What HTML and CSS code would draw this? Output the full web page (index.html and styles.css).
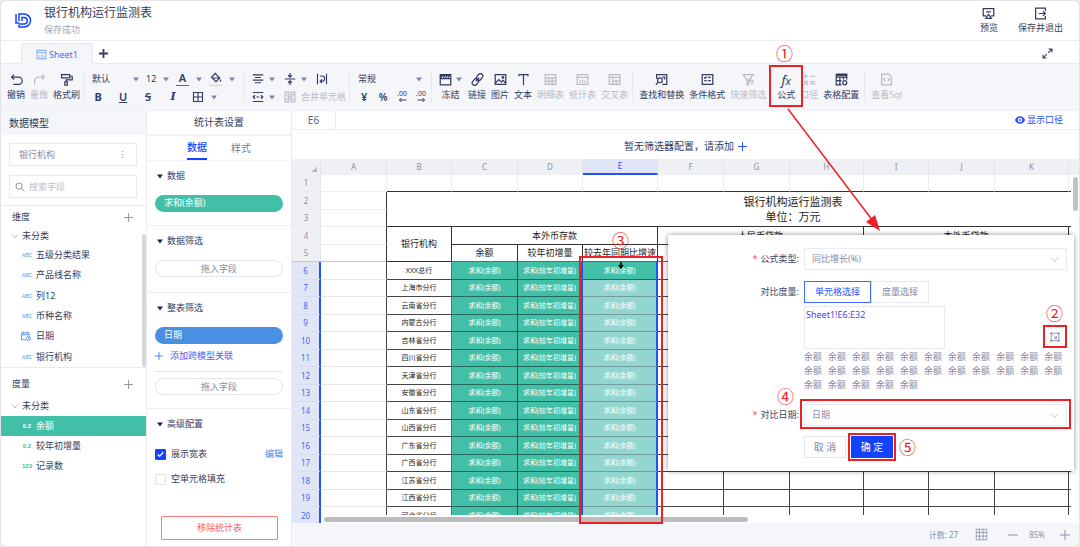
FILE: index.html
```
<!DOCTYPE html>
<html lang="zh-CN">
<head>
<meta charset="utf-8">
<meta name="viewport" content="width=device-width, initial-scale=1">
<title>银行机构运行监测表</title>
<link rel="stylesheet" href="styles.css">
</head>
<body>
<svg class="sprite" aria-hidden="true">
  <symbol id="caret" viewBox="0 0 6 5"><path d="M0 .5h6L3 4.5z" fill="currentColor"/></symbol>
  <symbol id="plus" viewBox="0 0 10 10"><path d="M5 0v10M0 5h10"/></symbol>
  <symbol id="chev" viewBox="0 0 10 10"><path d="M1.5 3 5 7.5 8.500 3"/></symbol>
  <symbol id="undo" viewBox="0 0 16 16"><path d="M5 2 2 5l3 3M2 5h8.500a4.500 4.500 0 0 1 0 9H4"/></symbol>
  <symbol id="redo" viewBox="0 0 16 16"><path d="m11 2 3 3-3 3M14 5H7a5 5 0 0 0-5 5v4"/></symbol>
  <symbol id="roller" viewBox="0 0 16 16"><path d="M2 2h10v4H2zM12 4h3v4.500H7.500V11M6 11h3v4H6z"/></symbol>
  <symbol id="bucket" viewBox="0 0 16 16"><path d="m6 1 7 7-5 5-6-6 5-5M3 8h9M14 10v3"/></symbol>
  <symbol id="grid4" viewBox="0 0 16 16"><path d="M2 2h12v12H2zM8 2v12M2 8h12"/></symbol>
  <symbol id="center" viewBox="0 0 16 16"><path d="M1 2.500h14M4 6h8M1 9.500h14M4 13h8"/></symbol>
  <symbol id="middle" viewBox="0 0 16 16"><path d="M1 8h14M8 0v5M5.500 3 8 5.500 10.500 3M8 16v-5M5.500 13 8 10.500 10.500 13"/></symbol>
  <symbol id="wrap" viewBox="0 0 16 16"><path d="M2 1v14M14 1v14M5 4h3a3 3 0 0 1 0 7H6M8 8.500 5.500 11 8 13.500"/></symbol>
  <symbol id="fitw" viewBox="0 0 16 16"><path d="M1 2h14M1 14h14M1 8h3M12 8h3M6 8h4M4 5.500 1.500 8 4 10.500M12 5.500 14.500 8 12 10.500"/></symbol>
  <symbol id="merge" viewBox="0 0 16 16"><path d="M6.500 1.500h-5v13h5zM14.500 1.500h-5v13h5zM1.500 5h5M1.500 11h5M9.500 5h5M9.500 11h5M4 8h8"/></symbol>
  <symbol id="freeze" viewBox="0 0 16 16"><path d="M1.500 2h13v12.500h-13zM1.500 7h13M2 6l3-4M5 6l3-4M8 6l3-4M11 6l3-4M1.500 3h13"/></symbol>
  <symbol id="link" viewBox="0 0 16 16"><g transform="rotate(-50 8 8)"><rect x="-.5" y="5" width="9" height="6" rx="3"/><rect x="7.500" y="5" width="9" height="6" rx="3"/><path d="M5 8h6"/></g></symbol>
  <symbol id="image" viewBox="0 0 16 16"><path d="M1.500 2h13v12h-13zM2 12l4-4 3 3 2-2 3 3"/><circle cx="11" cy="5.500" r="1"/></symbol>
  <symbol id="text" viewBox="0 0 16 16"><path d="M2.500 4V2h11v2M8 2v13"/></symbol>
  <symbol id="sheet" viewBox="0 0 16 16"><path d="M1.500 2h13v12h-13zM1.500 6h13M1.500 10h13M6 6v8M10 6v8"/></symbol>
  <symbol id="stat" viewBox="0 0 16 16"><path d="M1.500 2h13v12h-13zM1.500 5.500h13M5 9v3M8 8v4M11 9v3"/></symbol>
  <symbol id="cross" viewBox="0 0 16 16"><path d="M1.500 2h13v12h-13zM1.500 5.500h13M5.500 5.500V14M5.500 10h9M10 8v6"/></symbol>
  <symbol id="find" viewBox="0 0 16 16"><path d="M2 7V2h12.500v12H9M9 5h3v3"/><circle cx="6" cy="9" r="3"/><path d="m4 11.500-3 3"/></symbol>
  <symbol id="cond" viewBox="0 0 16 16"><path d="M1.500 2h13v12h-13zM4 5.500l1 1 2-2M8.500 5.500H12M4 9.500h3M8.500 9.500H12"/></symbol>
  <symbol id="filter" viewBox="0 0 16 16"><path d="M1 2h13l-4.500 5M1 2l5 6v6l2 1V7M11.500 6 9.500 10h4l-2 4"/></symbol>
  <symbol id="calc" viewBox="0 0 16 16"><path d="M1 4h5M3.500 1.500v5M9 4h6M1.500 9.500l4.500 5M6 9.500l-4.500 5M9 10.500h6M9 13.500h6"/></symbol>
  <symbol id="config" viewBox="0 0 16 16"><path d="M1.500 1.500h13V8M1.500 1.500v13H8M1.500 5h13M1.500 9.500H8M6 5v9.500M10.500 5v3M1.500 3h13"/><circle cx="12" cy="12" r="2.500"/></symbol>
  <symbol id="sql" viewBox="0 0 16 16"><path d="M2 1.500h9l3 3v10H2zM6.500 6 4.500 8l2 2M9.500 6l2 2-2 2"/></symbol>
  <symbol id="preview" viewBox="0 0 16 16"><path d="M5 11H1.500V2h13v9H11M5 6h6M8 9l3.500 5h-7z"/></symbol>
  <symbol id="exit" viewBox="0 0 16 16"><path d="M14 5V1.500H2v13h12V11M6 8h8M11 5l3 3-3 3"/></symbol>
  <symbol id="expand" viewBox="0 0 16 16"><path d="M9.500 1.500h5v5M14 2 9 7M6.500 14.500h-5v-5M2 14l5-5"/></symbol>
  <symbol id="search" viewBox="0 0 16 16"><circle cx="6.500" cy="6.500" r="5"/><path d="m10 10 5 5"/></symbol>
  <symbol id="cal" viewBox="0 0 16 16"><path d="M8 14H1V3h12v4M1 6h12M4 1v3M10 1v3"/><circle cx="12" cy="12" r="3.200"/><path d="M12 10.500V12h1.500"/></symbol>
  <symbol id="pick" viewBox="0 0 16 16"><path d="M3 3h10v10H3zM1.500 3h3M3 1.500v3M11.500 3h3M13 1.500v3M1.500 13h3M3 11.500v3M11.500 13h3M13 11.500v3M6 6l4 4M10 7v3H7"/></symbol>
</svg>

<div class="app">
  <header class="top">
    <svg class="logo" viewBox="0 0 17 16" aria-hidden="true"><path d="M1 1v9h3.500M4 8V1h5a6.500 6.500 0 0 1 0 13H4v-2.500M7 8V4.500h2a3 3 0 0 1 0 6.500H4.500"/></svg>
    <div class="doc"><h1>银行机构运行监测表</h1><p>保存成功</p></div>
    <button class="tool"><svg><use href="#preview"/></svg>预览</button>
    <button class="tool"><svg><use href="#exit"/></svg>保存并退出</button>
  </header>

  <nav class="tabs">
    <button class="tab"><svg><use href="#stat"/></svg>Sheet1</button>
    <button class="add" aria-label="新增"><svg><use href="#plus"/></svg></button>
    <button class="full" aria-label="全屏"><svg><use href="#expand"/></svg></button>
  </nav>

  <div class="toolbar">
    <div class="group history">
      <button class="tool"><svg><use href="#undo"/></svg>撤销</button>
      <button class="tool off"><svg><use href="#redo"/></svg>重做</button>
      <button class="tool"><svg><use href="#roller"/></svg>格式刷</button>
    </div>
    <div class="group two font">
      <div class="line">
        <span class="pick w-font"><select aria-label="字体"><option>默认</option></select><svg class="caret"><use href="#caret"/></svg></span>
        <span class="pick w-size"><select aria-label="字号"><option>12</option></select><svg class="caret"><use href="#caret"/></svg></span>
        <button class="mini"><span class="ink red">A</span><svg class="caret"><use href="#caret"/></svg></button>
        <button class="mini" aria-label="填充"><span class="ink yellow"><svg><use href="#bucket"/></svg></span><svg class="caret"><use href="#caret"/></svg></button>
      </div>
      <div class="line letters">
        <button class="mini b">B</button><button class="mini u">U</button><button class="mini s">S</button><button class="mini i">I</button>
        <button class="mini" aria-label="边框"><svg><use href="#grid4"/></svg><svg class="caret"><use href="#caret"/></svg></button>
      </div>
    </div>
    <div class="group two align">
      <div class="line">
        <button class="mini" aria-label="水平对齐"><svg><use href="#center"/></svg><svg class="caret"><use href="#caret"/></svg></button>
        <button class="mini" aria-label="垂直对齐"><svg><use href="#middle"/></svg><svg class="caret"><use href="#caret"/></svg></button>
        <button class="mini" aria-label="换行"><svg><use href="#wrap"/></svg></button>
      </div>
      <div class="line">
        <button class="mini" aria-label="列宽"><svg><use href="#fitw"/></svg><svg class="caret"><use href="#caret"/></svg></button>
        <button class="mini off"><svg><use href="#merge"/></svg>合并单元格</button>
      </div>
    </div>
    <div class="group two number">
      <div class="line"><span class="pick w-num"><select aria-label="数字格式"><option>常规</option></select><svg class="caret"><use href="#caret"/></svg></span></div>
      <div class="line"><button class="mini sym">¥</button><button class="mini sym">%</button>
        <button class="mini dec"><span>.00</span><svg viewBox="0 0 8 4"><path d="M8 2H1M3 0 1 2l2 2"/></svg></button>
        <button class="mini dec"><span>.00</span><svg viewBox="0 0 8 4"><path d="M0 2h7M5 0l2 2-2 2"/></svg></button></div>
    </div>
    <div class="group insert">
      <button class="tool drop"><span class="pair"><svg><use href="#freeze"/></svg><svg class="caret"><use href="#caret"/></svg></span>冻结</button>
      <button class="tool"><svg><use href="#link"/></svg>链接</button>
      <button class="tool"><svg><use href="#image"/></svg>图片</button>
      <button class="tool"><svg><use href="#text"/></svg>文本</button>
      <button class="tool off"><svg><use href="#sheet"/></svg>明细表</button>
      <button class="tool off"><svg><use href="#stat"/></svg>统计表</button>
      <button class="tool off"><svg><use href="#cross"/></svg>交叉表</button>
    </div>
    <div class="group review">
      <button class="tool"><svg><use href="#find"/></svg>查找和替换</button>
      <button class="tool"><svg><use href="#cond"/></svg>条件格式</button>
      <button class="tool off"><svg><use href="#filter"/></svg>快速筛选</button>
      <button class="tool formula"><i>f<small>x</small></i>公式</button>
      <button class="tool off"><svg><use href="#calc"/></svg>口径</button>
      <button class="tool"><svg><use href="#config"/></svg>表格配置</button>
    </div>
    <div class="group last"><button class="tool off"><svg><use href="#sql"/></svg>查看Sql</button></div>
  </div>

  <div class="work">
    <aside class="model">
      <h2>数据模型</h2>
      <div class="inputs">
        <button class="source">银行机构<span>⋮</span></button>
        <label class="search"><svg><use href="#search"/></svg><input type="text" placeholder="搜索字段" aria-label="搜索字段"></label>
      </div>
      <section class="dims">
        <h3>维度<button aria-label="添加维度"><svg><use href="#plus"/></svg></button></h3>
        <p class="folder"><svg><use href="#chev"/></svg>未分类</p>
        <ul>
          <li><em>ABC</em>五级分类结果</li>
          <li><em>ABC</em>产品线名称</li>
          <li><em>ABC</em>列12</li>
          <li><em>ABC</em>币种名称</li>
          <li><em><svg><use href="#cal"/></svg></em>日期</li>
          <li><em>ABC</em>银行机构</li>
        </ul>
        <span class="thumb"></span>
      </section>
      <section class="meas">
        <h3>度量<button aria-label="添加度量"><svg><use href="#plus"/></svg></button></h3>
        <p class="folder"><svg><use href="#chev"/></svg>未分类</p>
        <ul>
          <li class="on"><em>0.2</em>余额</li>
          <li><em>0.2</em>较年初增量</li>
          <li><em>123</em>记录数</li>
        </ul>
      </section>
    </aside>

    <aside class="setting">
      <h2>统计表设置</h2>
      <div class="switch"><button class="on">数据</button><button>样式</button></div>
      <section class="s-data"><h3><svg><use href="#caret"/></svg>数据</h3><div class="pill green">求和(余额)</div></section>
      <section class="s-filter"><h3><svg><use href="#caret"/></svg>数据筛选</h3><div class="pill empty">拖入字段</div></section>
      <section class="s-whole"><h3><svg><use href="#caret"/></svg>整表筛选</h3><div class="pill blue">日期</div>
        <button class="relate"><svg><use href="#plus"/></svg>添加跨模型关联</button>
        <div class="pill empty">拖入字段</div></section>
      <section class="s-more"><h3><svg><use href="#caret"/></svg>高级配置</h3>
        <div class="check"><label><input type="checkbox" checked>展示宽表</label><a href="#">编辑</a></div>
        <div class="check"><label><input type="checkbox">空单元格填充</label></div>
        <button class="remove">移除统计表</button>
      </section>
    </aside>

    <main class="main">
      <div class="cellbar"><span class="ref">E6</span><a href="#"><svg viewBox="0 0 16 12"><path d="M8 0C4 0 1 3 0 6c1 3 4 6 8 6s7-3 8-6c-1-3-4-6-8-6z" fill="currentColor"/><circle cx="8" cy="6" r="3.500" fill="#fff"/><circle cx="8" cy="6" r="1.500" fill="currentColor"/></svg>显示口径</a></div>
      <div class="filterbar">暂无筛选器配置，请添加<button aria-label="添加筛选器"><svg><use href="#plus"/></svg></button></div>
      <div class="sheet">
        <div class="view">
        <table>
          <colgroup><col class="c29"><col class="c66"><col class="c65"><col class="c66"><col class="c65"><col class="c75"><col class="c66"><col class="c66"><col class="c74"><col class="c65"><col class="c66"><col class="c74"><col class="c66"><col class="c65"></colgroup>
          <thead><tr><th class="corner"></th><th>A</th><th>B</th><th>C</th><th>D</th><th class="cur">E</th><th>F</th><th>G</th><th>H</th><th>I</th><th>J</th><th>K</th><th></th><th></th></tr></thead>
          <tbody class="head">
            <tr><th>1</th><td></td><td class="k"></td><td class="k"></td><td class="k"></td><td class="k"></td><td class="k"></td><td class="k"></td><td class="k"></td><td class="k"></td><td class="k"></td><td class="k"></td><td class="k"></td><td class="k"></td></tr>
            <tr><th>2</th><td class="edge"></td><td class="box title" rowspan="2" colspan="12">银行机构运行监测表<br>单位：万元</td></tr>
            <tr><th>3</th><td class="edge"></td></tr>
            <tr><th>4</th><td class="edge"></td><td class="box" rowspan="2">银行机构</td><td class="box" colspan="3">本外币存款</td><td class="box" colspan="3">人民币贷款</td><td class="box" colspan="3">本外币贷款</td><td class="box" colspan="2"></td></tr>
            <tr class="above"><th>5</th><td class="edge"></td><td class="box">余额</td><td class="box">较年初增量</td><td class="box">较去年同期比增速</td><td class="box"></td><td class="box"></td><td class="box"></td><td class="box"></td><td class="box"></td><td class="box"></td><td class="box"></td><td class="box"></td></tr>
          </tbody>
          <tbody class="rows">
            <tr><th>6</th><td></td><td>XXX总行</td><td>求和(余额)</td><td>求和(较年初增量)</td><td>求和(余额)</td><td></td><td></td><td></td><td></td><td></td><td></td><td></td><td></td></tr>
            <tr><th>7</th><td></td><td>上海市分行</td><td>求和(余额)</td><td>求和(较年初增量)</td><td>求和(余额)</td><td></td><td></td><td></td><td></td><td></td><td></td><td></td><td></td></tr>
            <tr><th>8</th><td></td><td>云南省分行</td><td>求和(余额)</td><td>求和(较年初增量)</td><td>求和(余额)</td><td></td><td></td><td></td><td></td><td></td><td></td><td></td><td></td></tr>
            <tr><th>9</th><td></td><td>内蒙古分行</td><td>求和(余额)</td><td>求和(较年初增量)</td><td>求和(余额)</td><td></td><td></td><td></td><td></td><td></td><td></td><td></td><td></td></tr>
            <tr><th>10</th><td></td><td>吉林省分行</td><td>求和(余额)</td><td>求和(较年初增量)</td><td>求和(余额)</td><td></td><td></td><td></td><td></td><td></td><td></td><td></td><td></td></tr>
            <tr><th>11</th><td></td><td>四川省分行</td><td>求和(余额)</td><td>求和(较年初增量)</td><td>求和(余额)</td><td></td><td></td><td></td><td></td><td></td><td></td><td></td><td></td></tr>
            <tr><th>12</th><td></td><td>天津省分行</td><td>求和(余额)</td><td>求和(较年初增量)</td><td>求和(余额)</td><td></td><td></td><td></td><td></td><td></td><td></td><td></td><td></td></tr>
            <tr><th>13</th><td></td><td>安徽省分行</td><td>求和(余额)</td><td>求和(较年初增量)</td><td>求和(余额)</td><td></td><td></td><td></td><td></td><td></td><td></td><td></td><td></td></tr>
            <tr><th>14</th><td></td><td>山东省分行</td><td>求和(余额)</td><td>求和(较年初增量)</td><td>求和(余额)</td><td></td><td></td><td></td><td></td><td></td><td></td><td></td><td></td></tr>
            <tr><th>15</th><td></td><td>山西省分行</td><td>求和(余额)</td><td>求和(较年初增量)</td><td>求和(余额)</td><td></td><td></td><td></td><td></td><td></td><td></td><td></td><td></td></tr>
            <tr><th>16</th><td></td><td>广东省分行</td><td>求和(余额)</td><td>求和(较年初增量)</td><td>求和(余额)</td><td></td><td></td><td></td><td></td><td></td><td></td><td></td><td></td></tr>
            <tr><th>17</th><td></td><td>广西省分行</td><td>求和(余额)</td><td>求和(较年初增量)</td><td>求和(余额)</td><td></td><td></td><td></td><td></td><td></td><td></td><td></td><td></td></tr>
            <tr><th>18</th><td></td><td>江苏省分行</td><td>求和(余额)</td><td>求和(较年初增量)</td><td>求和(余额)</td><td></td><td></td><td></td><td></td><td></td><td></td><td></td><td></td></tr>
            <tr><th>19</th><td></td><td>江西省分行</td><td>求和(余额)</td><td>求和(较年初增量)</td><td>求和(余额)</td><td></td><td></td><td></td><td></td><td></td><td></td><td></td><td></td></tr>
            <tr><th>20</th><td></td><td>河北省分行</td><td>求和(余额)</td><td>求和(较年初增量)</td><td>求和(余额)</td><td></td><td></td><td></td><td></td><td></td><td></td><td></td><td></td></tr>
          </tbody>
        </table>
        <div class="hbar"><span></span></div>
        </div>
        <div class="vbar"><span></span></div>
      </div>
      <footer class="status"><span>计数: 27</span><button class="gridbtn" aria-label="网格"><svg viewBox="0 0 16 16"><path d="M1.500 1.500h13v13h-13zM5.500 1.500v13M10 1.500v13M1.500 5.500h13M1.500 10h13"/></svg></button>
        <button aria-label="缩小"><svg viewBox="0 0 10 10"><path d="M0 5h10"/></svg></button><span>85%</span><button aria-label="放大"><svg><use href="#plus"/></svg></button></footer>
    </main>
  </div>
</div>

<form class="dialog">
  <label class="req" for="type">公式类型:</label>
  <div class="field"><select id="type"><option>同比增长(%)</option></select><svg><use href="#chev"/></svg></div>
  <span class="lab">对比度量:</span>
  <div class="seg"><button type="button" class="on">单元格选择</button><button type="button">度量选择</button></div>
  <div class="range"><textarea aria-label="单元格范围">Sheet1!E6:E32</textarea><button type="button" aria-label="选取区域"><svg><use href="#pick"/></svg></button></div>
  <div class="vals"><span>余额</span><span>余额</span><span>余额</span><span>余额</span><span>余额</span><span>余额</span><span>余额</span><span>余额</span><span>余额</span><span>余额</span><span>余额</span><span>余额</span><span>余额</span><span>余额</span><span>余额</span><span>余额</span><span>余额</span><span>余额</span><span>余额</span><span>余额</span><span>余额</span><span>余额</span><span>余额</span><span>余额</span><span>余额</span><span>余额</span><span>余额</span></div>
  <label class="req" for="date">对比日期:</label>
  <div class="field"><select id="date"><option>日期</option></select><svg><use href="#chev"/></svg></div>
  <div class="acts"><button type="button">取 消</button><button type="button" class="ok">确 定</button></div>
</form>

<div class="notes">
  <svg class="arrow" viewBox="0 0 94 124"><path d="M1 1 86 113" stroke="#ee2026" stroke-width="1.500"/><path d="m93 123-14-9 9-7z" fill="#ee2026"/></svg>
  <svg class="down" viewBox="0 0 6 7"><path d="M3 0v5M1 3l2 3 2-3" stroke="#000" stroke-width="1.500" fill="none"/></svg>
  <span class="frame f1"></span><span class="frame f2"></span><span class="frame f3"></span><span class="frame f4"></span><span class="frame f5"></span>
  <span class="num n1">①</span><span class="num n2">②</span><span class="num n3">③</span><span class="num n4">④</span><span class="num n5">⑤</span>
</div>
</body>
</html>
```
FILE: styles.css
```
* { box-sizing: border-box; margin: 0; padding: 0; }
body {
  background: #e9e9ea;
  color: #333c60;
  font: 9px/14px "Noto Sans", "Noto Sans CJK SC", sans-serif;
  position: relative;
  overflow: hidden;
}
button, input, select, textarea { font: inherit; color: inherit; background: none; border: 0; outline: 0; }
select { appearance: none; }
a { text-decoration: none; }
ul { list-style: none; }
svg { fill: none; stroke: currentColor; stroke-width: 1.5; display: block; flex: none; width: 12px; height: 12px; }
.sprite { position: absolute; width: 0; height: 0; }
.caret { width: 6px; height: 5px; color: #7f86a8; stroke: none; }

.app { display: flex; flex-direction: column; height: 100vh; min-height: 547px; background: #fff; border: 1px solid #e3e4e6; border-radius: 7px; overflow: hidden; }

.top { display: flex; align-items: center; height: 40px; padding: 0 16px 0 14px; border-bottom: 1px solid #ecedf1; flex: none; }
.logo { width: 17px; height: 16px; color: #1443ff; stroke-width: 1.5; margin-right: 12px; }
.doc { flex: 1; }
.doc h1 { font-size: 12px; line-height: 18px; font-weight: 400; }
.doc p { color: #a4a8b8; line-height: 16px; }
.top .tool { margin-left: 20px; }
.tool { display: flex; flex-direction: column; align-items: center; gap: 1px; line-height: 14px; white-space: nowrap; }
.tool svg { width: 13px; height: 13px; }
.off { color: #b9bbc4; }

.tabs { display: flex; height: 23px; padding: 2px 26px 0 20px; border-bottom: 1px solid #e8eaf0; flex: none; align-items: center; }
.tab { display: flex; align-items: center; justify-content: center; gap: 2px; width: 72px; height: 22px; background: #f5f6fa; border: 1px solid #e5e7ee; border-bottom: 0; border-radius: 3px 3px 0 0; color: #4b68f3; font-size: 9px; align-self: flex-start; }
.tab svg { width: 11px; height: 11px; color: #85b5ee; }
.add { margin-left: 6px; }
.add svg { width: 9px; height: 9px; stroke-width: 2; }
.full { margin-left: auto; }
.full svg { width: 11px; height: 11px; }

.toolbar { display: flex; align-items: center; height: 47px; background: #f5f6fa; border-bottom: 1px solid #f0f1f5; flex: none; }
.group { display: flex; gap: 5px; padding: 0 5px; height: 30px; border-right: 1px solid #e6e8ee; align-items: center; flex: none; }
.group .tool svg { margin-bottom: 1px; }
.group .tool .caret { width: 6px; height: 5px; }
.history { padding: 0 4px 0 6px; }
.two { flex-direction: column; align-items: stretch; gap: 4px; }
.line { display: flex; align-items: center; height: 14px; }
.font { width: 160px; padding: 0 7px; }
.font .line { gap: 7px; }
.font .letters { gap: 13px; }
.align { width: 105px; padding: 0 0 0 7px; }
.align .line { gap: 9px; }
.number { width: 82px; padding: 0 0 0 8px; }
.number .line { gap: 7px; }
.insert { padding: 0 4px 0 6px; }
.review { padding: 0 5px 0 6px; }
.last { padding: 0 6px; border: 0; }
.pick { display: flex; align-items: center; }
.pick select { flex: 1; width: 0; height: 14px; }
.w-font { width: 47px; }
.w-size { width: 23px; }
.w-num { width: 64px; }
.mini { display: flex; align-items: center; justify-content: flex-start; gap: 5px; height: 14px; min-width: 12px; font-size: 9px; white-space: nowrap; }
.font .mini { gap: 7px; }
.font .letters .mini { font-size: 11px; justify-content: center; }
.b { font-weight: 700; }
.u { text-decoration: underline; font-weight: 600; }
.s { text-decoration: line-through; font-weight: 600; }
.i { font-style: italic; font-weight: 600; font-family: "DejaVu Serif", serif; }
.ink { display: flex; justify-content: center; width: 13px; height: 14px; font-size: 11px; line-height: 12px; font-weight: 600; border-bottom: 1px solid; }
.ink svg { width: 12px; height: 12px; }
.ink.red { border-bottom-color: #f0302c; }
.ink.yellow { border-bottom-color: #f5e02a; }
.sym { font-size: 11px; font-weight: 600; justify-content: center; }
.sym + .sym { font-size: 10px; }
.dec { flex-direction: column; gap: 0; font-size: 7px; line-height: 8px; }
.dec svg { width: 9px; height: 4px; stroke-width: 1; }
.pair { display: flex; align-items: center; gap: 4px; }
.drop { width: 25px; }
.formula { margin-left: 6px; }
.formula i { font: italic 13px/14px "Noto Sans", sans-serif; height: 14px; }
.formula small { font-size: 11px; }

.work { display: flex; flex: 1; min-height: 0; }
h2, h3 { font-weight: 400; font-size: 9px; }
.model { width: 146px; border-right: 1px solid #e9ebf0; display: flex; flex-direction: column; flex: none; }
.model h2 { background: #f5f6fa; font-size: 10px; line-height: 24px; padding-left: 8px; }
.inputs { padding: 8px 9px 7px 8px; display: grid; gap: 9px; border-bottom: 1px solid #ecedf1; }
.source, .search { display: flex; align-items: center; height: 23px; border: 1px solid #e8eaf0; color: #868ba3; }
.source { justify-content: space-between; padding: 0 9px; }
.search { padding: 0 5px; gap: 4px; }
.search svg { width: 10px; height: 10px; }
.search input { width: 100%; }
.search input::placeholder { color: #bcc0cc; }
.model h3 { display: flex; justify-content: space-between; align-items: center; padding: 0 13px 0 11px; height: 20px; }
.model h3 svg { width: 9px; height: 9px; color: #8b8f9f; stroke-width: 1; }
.folder { display: flex; align-items: center; gap: 3px; padding-left: 10px; height: 18px; }
.folder svg { width: 8px; height: 8px; color: #a9adba; stroke-width: 1; }
.dims { position: relative; display: flex; flex-direction: column; height: 162px; padding-top: 1px; border-bottom: 1px solid #e9ebf0; }
.dims ul { display: flex; flex-direction: column; flex: 1; }
.model li { display: flex; align-items: center; padding-left: 20px; gap: 3px; height: 20px; }
.model .dims li { flex: 1; }
.model em { width: 12px; font: italic 5px/8px "Liberation Sans", sans-serif; color: #4f94e6; flex: none; text-align: center; }
.model em svg { width: 10px; height: 10px; }
.meas { padding-top: 5px; }
.meas h3 { height: 22px; }
.meas .folder { height: 21px; }
.model .meas em { font: 700 6px/8px "Liberation Sans", sans-serif; color: #41c0a8; }
.model .meas .on { background: #41bfa7; color: #fff; }
.model .meas .on em { color: #fff; }
.thumb { position: absolute; right: 0; top: 28px; bottom: 0; width: 4px; border-radius: 2px; background: #d6d7da; }

.setting { width: 145px; border-right: 1px solid #e9ebf0; flex: none; display: flex; flex-direction: column; }
.setting h2 { text-align: center; font-size: 10px; line-height: 23px; border-bottom: 2px solid #f1f2f5; }
.switch { display: flex; justify-content: center; gap: 24px; height: 25px; border-bottom: 1px solid #f1f2f5; }
.switch button { font-size: 10px; color: #747b98; width: 20px; white-space: nowrap; }
.switch .on { color: #1443ff; font-weight: 500; border-bottom: 2px solid #1443ff; }
.setting section { padding: 8px 8px 0; border-bottom: 1px solid #edeef2; }
.setting h3 { display: flex; align-items: center; gap: 4px; height: 14px; }
.setting h3 svg { width: 6px; height: 5px; stroke: none; color: #1b2650; margin-left: 2px; }
.pill { height: 17px; line-height: 16px; border-radius: 9px; padding: 0 9px; color: #fff; margin-top: 12px; }
.green { background: #41bfa7; }
.blue { background: #4990e2; }
.empty { border: 1px solid #e3e5ec; line-height: 15px; text-align: center; color: #868ba3; }
.s-data { height: 65px; }
.s-filter { height: 67px; }
.s-whole { height: 116px; }
.setting .s-more { flex: 1; border: 0; display: flex; flex-direction: column; }
.relate { display: flex; align-items: center; gap: 7px; width: 100%; height: 28px; color: #3f5ff5; border-bottom: 1px solid #e3e5ec; padding-bottom: 3px; }
.relate svg { width: 8px; height: 8px; stroke-width: 1; }
.s-whole .relate + .pill { margin-top: 6px; }
.check { display: flex; justify-content: space-between; height: 14px; margin-top: 11px; }
.s-more h3 + .check { margin-top: 16px; }
.check label { display: flex; align-items: center; gap: 5px; }
.check a { color: #3c8cf5; }
.check input { appearance: none; width: 11px; height: 11px; border: 1px solid #e0e2ea; border-radius: 1px; }
.check input:checked { background: #1443ff url("data:image/svg+xml,%3Csvg xmlns='http://www.w3.org/2000/svg' viewBox='0 0 10 10'%3E%3Cpath d='M2 5l2 2 4-4.500' fill='none' stroke='white' stroke-width='1.400'/%3E%3C/svg%3E"); border-color: #1443ff; }
.remove { margin: auto 5px 6px 6px; height: 24px; border: 1px solid #fb7b7b; border-radius: 1px; color: #f95c5c; }

.main { flex: 1; min-width: 0; display: flex; flex-direction: column; }
.cellbar { display: flex; justify-content: space-between; align-items: center; height: 19px; border-bottom: 1px solid #edeef2; padding-right: 16px; flex: none; }
.ref { width: 44px; line-height: 18px; border-right: 1px solid #edeef2; text-align: center; font-size: 10px; color: #5a6286; }
.cellbar a { display: flex; align-items: center; gap: 2px; color: #2450ff; }
.cellbar svg { width: 10px; height: 8px; stroke: none; }
.filterbar { display: flex; align-items: center; justify-content: center; gap: 4px; height: 29px; padding-top: 3px; font-size: 10px; flex: none; }
.filterbar svg { width: 9px; height: 9px; color: #1443ff; stroke-width: 1; }
.sheet { display: flex; flex: 1; min-height: 0; }
.view { position: relative; flex: 1; min-width: 0; overflow: hidden; }
.vbar { width: 8px; background: linear-gradient(#eff0f3 16px, #fff 16px); padding: 18px 1px 0 2px; }
.vbar span { display: block; height: 34px; border-radius: 3px; background: #c2c2c4; }
.hbar { position: absolute; left: 29px; right: 0; bottom: 0; height: 8px; background: #fff; padding: 2px 3px; }
.hbar span { display: block; width: 57%; height: 5px; border-radius: 3px; background: #bcbcbd; }

table { table-layout: fixed; width: 908px; border-collapse: separate; border-spacing: 0; }
.c29 { width: 29px; }
.c65 { width: 65px; }
.c66 { width: 66px; }
.c74 { width: 74px; }
.c75 { width: 75px; }
th { background: #eff0f3; color: #8a90a8; font-size: 8px; line-height: 14px; font-weight: 400; border-right: 1px solid #e3e5ea; border-bottom: 1px solid #e8eaee; }
thead th { height: 16px; border-bottom: 0; }
.corner { background: #eff0f3 linear-gradient(135deg, transparent 50%, #b3b6c0 50%) no-repeat right 3px bottom 3px / 5px 5px; }
.cur { background: #e1e6f6; color: #2450ff; border-bottom: 2px solid #2450ff; line-height: 12px; }
td { text-align: center; color: #222; white-space: nowrap; border-right: 1px solid #eceef3; border-bottom: 1px solid #eceef3; line-height: 14px; }
.head tr:nth-child(odd), .rows tr:nth-child(even) { height: 17px; }
.head tr:nth-child(even), .rows tr:nth-child(odd) { height: 18px; }
.head .k { border-bottom-color: #333; }
.head .edge { border-right-color: #333; }
.head .box { border-color: #333; }
.title { font-size: 11px; line-height: 15px; }
.above td, .above th { border-bottom-color: #b9c5f8; }
.above .box { border-bottom-color: #3a62f0; }
.rows th { background: #e1e6f6; color: #4566f0; border-right: 2px solid #2450ff; border-bottom-color: #d9dff2; }
.rows td { border-color: #444; font-size: 7px; }
.rows td:nth-child(2) { border-bottom-color: #e5e7ec; }
.rows td:nth-child(3) { border-right-color: #2f6fd8; }
.rows td:nth-child(4), .rows td:nth-child(5), .rows td:nth-child(6) { background: #41bfa7; color: #fff; border-bottom-color: #22695c; }
.rows td:nth-child(5), .rows td:nth-child(6) { border-right: 2px solid #2450ff; }
.rows tr + tr td:nth-child(6) { background: #93d5cf; border-bottom-color: #719d9d; }

.status { display: flex; align-items: center; justify-content: flex-end; height: 23px; background: #f5f6fa; padding-right: 9px; color: #8a90a8; font-size: 8px; flex: none; }
.status button svg { width: 10px; height: 10px; stroke-width: 1; }
.status .gridbtn { margin: 0 20px 0 17px; }
.status .gridbtn svg { width: 13px; height: 13px; }
.status button + span { margin: 0 15px 0 11px; }

.dialog { position: absolute; left: 668px; top: 235px; width: 406px; padding: 13px 7px 13px 0; background: #fff; box-shadow: 0 0 5px rgba(0, 0, 0, .45); display: grid; grid-template-columns: 131px 1fr; column-gap: 5px; color: #3f4666; }
.dialog > label, .lab { text-align: right; line-height: 22px; }
.req::before { content: "*"; color: #f5504e; margin-right: 3px; }
.field { display: flex; align-items: center; height: 22px; border: 1px solid #e8eaf0; padding: 0 7px; color: #868ba3; }
.field select { flex: 1; height: 20px; }
.field svg { width: 9px; height: 9px; color: #bfc2cd; stroke-width: 1; }
.lab { margin-top: 11px; }
.seg { display: flex; margin-top: 11px; }
.seg button { height: 22px; padding: 0 10px; border: 1px solid #e8eaf0; color: #868ba3; }
.seg .on { border-color: #3f66ff; color: #2450ff; }
.range { grid-column: 2; display: flex; justify-content: space-between; align-items: flex-end; margin-top: 3px; }
.range textarea { width: 141px; height: 43px; border: 1px solid #e8eaf0; padding: 1px; resize: none; color: #4743ee; display: block; }
.range button { margin: 0 6px 6px 0; }
.range svg { color: #777d98; stroke-width: 1; }
.vals { grid-column: 2; display: flex; flex-wrap: wrap; column-gap: 6px; margin: 1px 0 12px; color: #868ba3; line-height: 14px; }
.vals span { height: 14px; }
.acts { grid-column: 2; display: flex; gap: 5px; margin-top: 10px; }
.acts button { width: 42px; height: 22px; border: 1px solid #e3e5ec; color: #868ba3; font-size: 10px; }
.acts .ok { background: #1443ff; border-color: #1443ff; color: #fff; }

.notes > * { position: absolute; pointer-events: none; }
.arrow { left: 787px; top: 108px; width: 94px; height: 124px; stroke: none; }
.down { left: 618px; top: 262px; width: 6px; height: 7px; }
.frame { border: 2px solid #ee2026; }
.f1 { left: 769px; top: 65px; width: 34px; height: 42px; }
.f2 { left: 1043px; top: 325px; width: 24px; height: 23px; }
.f3 { left: 579px; top: 256px; width: 84px; height: 268px; }
.f4 { left: 800px; top: 399px; width: 271px; height: 30px; }
.f5 { left: 848px; top: 433px; width: 48px; height: 28px; }
.num { color: #ee2026; font: 17px/18px "Noto Sans CJK SC", sans-serif; }
.n1 { left: 776px; top: 44px; }
.n2 { left: 1046px; top: 304px; }
.n3 { left: 612px; top: 231px; }
.n4 { left: 777px; top: 387px; }
.n5 { left: 899px; top: 438px; }
```
